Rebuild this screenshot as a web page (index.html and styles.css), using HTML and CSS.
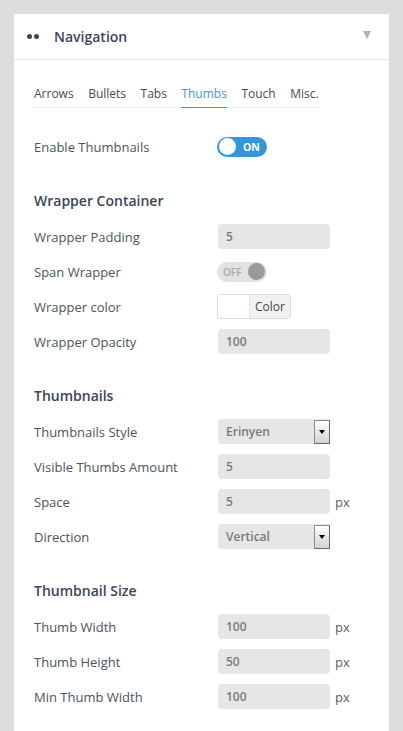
FILE: index.html
```html
<!DOCTYPE html>
<html>
<head>
<meta charset="utf-8">
<link rel="stylesheet" href="styles.css">
</head>
<body>
<div class="card">
  <div class="card-head">
    <span class="dots"><i></i><i></i></span>
    <span class="title">Navigation</span>
    <span class="caret"></span>
  </div>
  <div class="card-body">
    <div class="tabs">
      <span class="tab">Arrows</span>
      <span class="tab">Bullets</span>
      <span class="tab">Tabs</span>
      <span class="tab active">Thumbs</span>
      <span class="tab">Touch</span>
      <span class="tab">Misc.</span>
    </div>

    <div class="row first">
      <span class="label">Enable Thumbnails</span>
      <span class="toggle on"><i class="knob"></i><b>ON</b></span>
    </div>

    <div class="heading">Wrapper Container</div>
    <div class="row"><span class="label">Wrapper Padding</span><span class="input">5</span></div>
    <div class="row"><span class="label">Span Wrapper</span><span class="toggle off"><b>OFF</b><i class="knob"></i></span></div>
    <div class="row"><span class="label">Wrapper color</span><span class="color"><span class="swatch"></span><span class="color-txt">Color</span></span></div>
    <div class="row"><span class="label">Wrapper Opacity</span><span class="input">100</span></div>

    <div class="heading">Thumbnails</div>
    <div class="row"><span class="label">Thumbnails Style</span><span class="select"><span class="sel-txt">Erinyen</span><span class="sel-btn"></span></span></div>
    <div class="row"><span class="label">Visible Thumbs Amount</span><span class="input">5</span></div>
    <div class="row"><span class="label">Space</span><span class="input">5</span><span class="unit">px</span></div>
    <div class="row"><span class="label">Direction</span><span class="select"><span class="sel-txt">Vertical</span><span class="sel-btn"></span></span></div>

    <div class="heading">Thumbnail Size</div>
    <div class="row"><span class="label">Thumb Width</span><span class="input">100</span><span class="unit">px</span></div>
    <div class="row"><span class="label">Thumb Height</span><span class="input">50</span><span class="unit">px</span></div>
    <div class="row"><span class="label">Min Thumb Width</span><span class="input">100</span><span class="unit">px</span></div>
  </div>
</div>
</body>
</html>
```
FILE: styles.css
```css
html, body {
  margin: 0;
  padding: 0;
  background: #dddddd;
  font-family: "Open Sans", "Liberation Sans", sans-serif;
  color: #4b5460;
  overflow: hidden;
}
.card {
  margin: 14px 0 0 14px;
  width: 375px;
  height: 760px;
  background: #ffffff;
}
.card-head {
  height: 45px;
  border-bottom: 1px solid #e9e9e9;
  display: flex;
  align-items: center;
  padding-left: 13px;
  padding-right: 18px;
}
.dots {
  display: flex;
  gap: 2px;
  width: 27px;
}
.dots i {
  display: block;
  width: 5px;
  height: 5px;
  border-radius: 50%;
  background: #3a4659;
}
.title {
  font-size: 14px;
  font-weight: 600;
  color: #3a4659;
  flex: 1;
}
.caret {
  width: 0;
  height: 0;
  border-left: 4px solid transparent;
  border-right: 4px solid transparent;
  border-top: 8px solid #b3b3b3;
  margin-top: -3px;
}
.card-body {
  padding: 0 20px;
}
.tabs {
  display: inline-flex;
  gap: 14.5px;
  margin-top: 25px;
  border-bottom: 1px solid #ececec;
  font-size: 12px;
}
.tab {
  line-height: 18px;
  padding-bottom: 4px;
  color: #444b55;
}
.tab.active {
  color: #3a9ad9;
  border-bottom: 1px solid #3a9ad9;
  margin-bottom: -1px;
}
.row {
  height: 35px;
  display: flex;
  align-items: center;
  font-size: 13px;
}
.row.first {
  margin-top: 21px;
}
.label {
  width: 184px;
  flex: none;
}
.heading {
  margin-top: 27px;
  margin-bottom: 8px;
  line-height: 20px;
  font-size: 14px;
  font-weight: 600;
  color: #3c4657;
}
.toggle {
  width: 50px;
  height: 20px;
  border-radius: 10px;
  display: flex;
  align-items: center;
  box-sizing: border-box;
  margin-left: -1px;
}
.toggle b {
  font-size: 10.5px;
  font-weight: 700;
}
.toggle .knob {
  display: block;
  width: 17px;
  height: 17px;
  border-radius: 50%;
}
.toggle.on {
  background: #3396dc;
  padding-left: 2px;
}
.toggle.on .knob {
  background: #ffffff;
}
.toggle.on b {
  color: #ffffff;
  margin-left: 7px;
}
.toggle.off {
  background: #e2e2e2;
  padding-left: 6px;
  justify-content: space-between;
  padding-right: 2px;
}
.toggle.off .knob {
  background: #9a9a9a;
}
.toggle.off b {
  color: #a9a9a9;
  font-weight: 600;
  font-size: 10px;
}
.input {
  width: 112px;
  height: 25px;
  box-sizing: border-box;
  background: #e6e6e6;
  border-radius: 4px;
  padding-left: 8px;
  display: flex;
  align-items: center;
  font-size: 12px;
  font-weight: 600;
  color: #7a7a7a;
}
.unit {
  margin-left: 5px;
  font-size: 13px;
  color: #555d68;
}
.color {
  display: flex;
  width: 74px;
  height: 25px;
  box-sizing: border-box;
  border: 1px solid #dcdcdc;
  border-radius: 3px;
  overflow: hidden;
  margin-left: -1px;
}
.swatch {
  width: 31px;
  background: #ffffff;
  border-right: 1px solid #e4e4e4;
}
.color-txt {
  flex: 1;
  background: #f1f1f1;
  font-size: 12px;
  color: #444;
  display: flex;
  align-items: center;
  justify-content: center;
}
.select {
  width: 112px;
  height: 25px;
  box-sizing: border-box;
  background: #e6e6e6;
  border-radius: 4px 0 0 4px;
  display: flex;
  align-items: stretch;
}
.sel-txt {
  flex: 1;
  padding-left: 8px;
  display: flex;
  align-items: center;
  font-size: 12px;
  font-weight: 600;
  color: #7a7a7a;
}
.sel-btn {
  width: 16px;
  box-sizing: border-box;
  border: 1px solid #8a8a8a;
  border-right-color: #666;
  border-bottom-color: #666;
  background: linear-gradient(#ffffff, #d2d2d2);
  position: relative;
  margin: 1px 0 0 0;
}
.sel-btn::after {
  content: "";
  position: absolute;
  left: 4px;
  top: 9px;
  border-left: 3px solid transparent;
  border-right: 3px solid transparent;
  border-top: 4px solid #000;
}
```
